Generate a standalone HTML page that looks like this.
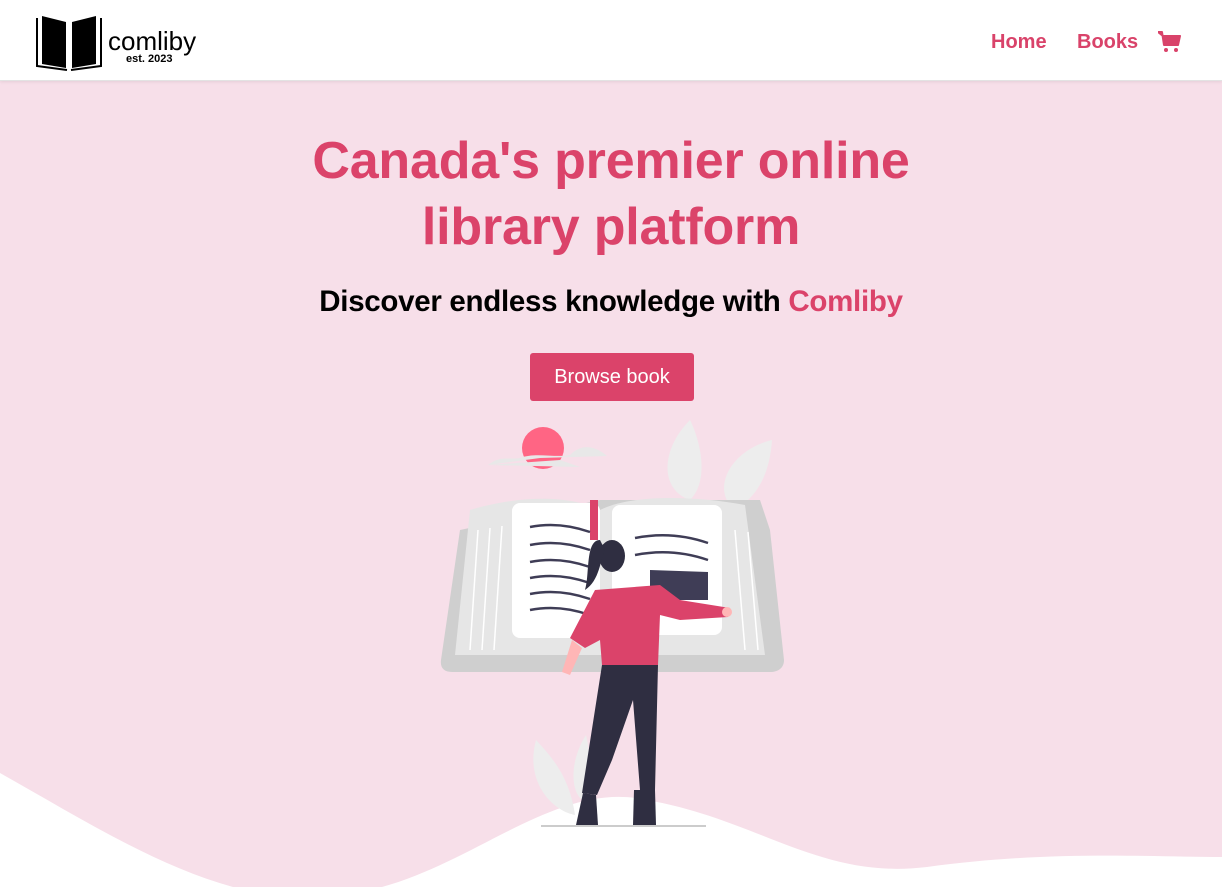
<!DOCTYPE html>
<html><head><meta charset="utf-8"><style>
*{margin:0;padding:0;box-sizing:border-box}
body{width:1222px;height:887px;overflow:hidden;background:#f7dfe9;font-family:"Liberation Sans",sans-serif;position:relative}
header{position:absolute;left:0;top:0;width:1222px;height:81px;background:#fff;border-bottom:1px solid #e3e3e3;box-shadow:0 1px 3px rgba(0,0,0,.08)}
.nav a{position:absolute;top:31px;color:#d9436a;font-weight:bold;font-size:20px;text-decoration:none}
h1{position:absolute;top:128px;left:0;width:1222px;text-align:center;color:#db436a;font-size:52px;line-height:66px;font-weight:bold;letter-spacing:-0.2px}
h2{position:absolute;top:285px;left:0;width:1222px;text-align:center;color:#000;font-size:29.5px;font-weight:bold;letter-spacing:-0.3px}
h2 span{color:#db436a}
.btn{position:absolute;left:530px;top:353px;width:164px;height:48px;background:#db436a;color:#fff;border-radius:3px;font-size:20px;text-align:center;line-height:48px}
svg{position:absolute;left:0;top:0}
</style></head><body>
<svg width="1222" height="887">
<path d="M0 773 C120 840 250 930 382 887 C480 860 560 780 647 800 C760 820 820 880 927 867 C1050 850 1150 857 1222 857 L1222 887 L0 887Z" fill="#fff"/>
<path d="M690 420 C660 450 660 490 690 500 C710 480 700 440 690 420Z" fill="#ededed"/>
<path d="M772 440 C730 450 710 490 735 510 C760 495 770 470 772 440Z" fill="#ededed"/>
<path d="M536 740 C525 780 550 810 575 815 C570 780 555 760 536 740Z" fill="#ededed"/>
<path d="M586 735 C570 760 570 790 582 800 C590 780 592 760 586 735Z" fill="#ededed"/>
<circle cx="543" cy="448" r="21" fill="#ff6584"/>
<path d="M488 465 C500 455 510 460 520 458 C535 452 555 458 570 455 C585 440 600 450 607 456 L540 458 Z" fill="#e8e8e8"/>
<path d="M488 465 L580 467 L560 460 Z" fill="#e8e8e8"/>
<path d="M460 530 L600 500 L760 500 L770 530 L784 660 C784 668 778 672 770 672 L452 672 C444 672 440 668 441 660Z" fill="#cfcfcf"/>
<path d="M470 510 C520 495 570 495 600 510 C630 495 690 495 745 505 L765 655 L455 655Z" fill="#e6e6e6"/>
<rect x="512" y="503" width="88" height="135" rx="8" fill="#fff"/>
<rect x="612" y="505" width="110" height="130" rx="8" fill="#fff"/>
<rect x="590" y="500" width="8" height="40" fill="#db436a"/>
<g stroke="#3f3d56" stroke-width="2.5" fill="none">
<path d="M530 527 C550 523 570 525 590 532"/><path d="M530 545 C550 541 570 543 590 550"/><path d="M530 562 C550 558 570 560 590 567"/><path d="M530 578 C550 574 570 576 590 583"/><path d="M530 594 C550 590 570 592 590 599"/><path d="M530 610 C550 606 570 608 590 615"/>
<path d="M635 538 C660 533 685 535 708 543"/><path d="M635 555 C660 550 685 552 708 560"/>
</g>
<path d="M650 570 L708 572 L708 600 L650 600Z" fill="#3f3d56"/>
<g stroke="#fff" stroke-width="1.5"><path d="M478 530 L470 650"/><path d="M490 528 L482 650"/><path d="M502 526 L494 650"/><path d="M735 530 L745 650"/><path d="M748 532 L758 650"/></g>
<ellipse cx="612" cy="556" rx="13" ry="16" fill="#2f2e41"/>
<path d="M600 540 C585 540 590 575 585 590 C600 580 600 560 605 550Z" fill="#2f2e41"/>
<path d="M595 590 L660 585 L680 600 L730 608 L728 617 L680 620 L660 615 L658 665 L602 665 L600 640 L585 648 L570 638Z" fill="#db436a"/>
<circle cx="727" cy="612" r="5" fill="#ffb6b6"/>
<path d="M572 640 L582 648 L570 675 L562 672Z" fill="#ffb6b6"/>
<path d="M602 665 L658 665 L655 790 L640 790 L633 700 L612 760 L597 795 L582 793Z" fill="#2f2e41"/>
<path d="M583 793 L596 795 L598 825 L576 825Z" fill="#2f2e41"/>
<path d="M634 790 L655 790 L656 825 L633 825Z" fill="#2f2e41"/>
<rect x="541" y="825" width="165" height="2" fill="#ccc"/>
</svg>
<header>
<svg width="70" height="70" viewBox="0 0 70 70" style="left:34px;top:8px">
<path d="M8 8 L8 56 L32 60 L32 14 Z M62 8 L62 56 L38 60 L38 14Z" fill="#000"/>
<path d="M3 10 L3 58 L33 62 M67 10 L67 58 L37 62" stroke="#000" stroke-width="2" fill="none"/>
</svg>
<div style="position:absolute;left:108px;top:26px;font-size:26px;color:#000">comliby</div>
<div style="position:absolute;left:126px;top:53px;font-size:11px;font-weight:bold;color:#000">est. 2023</div>
<div class="nav"><a style="left:991px">Home</a><a style="left:1077px">Books</a></div>
<svg width="24" height="22" viewBox="0 0 24 22" style="left:1158px;top:31px"><path d="M0 1 L4 1 L6 14 L20 14 L22 5 L5 5Z" fill="#d9436a" stroke="#d9436a" stroke-width="2" stroke-linejoin="round"/><circle cx="8" cy="19" r="2" fill="#d9436a"/><circle cx="18" cy="19" r="2" fill="#d9436a"/></svg>
</header>
<h1>Canada's premier online<br>library platform</h1>
<h2>Discover endless knowledge with <span>Comliby</span></h2>
<div class="btn">Browse book</div>
</body></html>
